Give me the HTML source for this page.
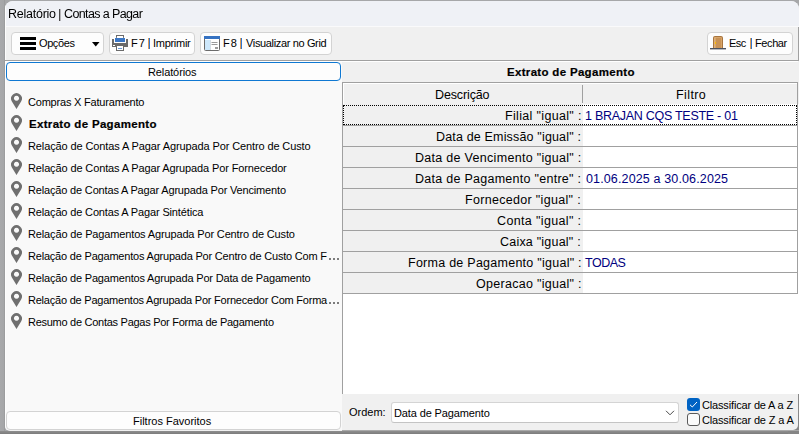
<!DOCTYPE html>
<html><head><meta charset="utf-8">
<style>
html,body{margin:0;padding:0;}
body{width:799px;height:434px;position:relative;overflow:hidden;background:#a6a7a9;font-family:"Liberation Sans",sans-serif;}
.a{position:absolute;}
.t{position:absolute;white-space:pre;font-family:"Liberation Sans",sans-serif;}
.btn{position:absolute;box-sizing:border-box;background:#fdfdfd;border:1px solid #d3d3d3;border-radius:4px;}
</style></head><body>
<!-- frame -->
<div class="a" style="left:0;top:0;width:5px;height:434px;background:linear-gradient(to right,#a8a9ab 0,#a5a6a8 80%,#939495 100%);"></div>
<div class="a" style="left:0;top:431px;width:799px;height:3px;background:linear-gradient(to bottom,#8e8e8e,#7c7c7c);"></div>
<!-- window -->
<div class="a" style="left:5px;top:1px;width:794px;height:430px;background:#f0f0f0;border-radius:8px 8px 5px 5px;overflow:hidden;">
  <!-- title bar -->
  <div class="a" style="left:0;top:0;width:794px;height:25px;background:#eff1f6;"></div>
  <div class="a" style="left:0;top:25px;width:794px;height:1px;background:#fafafb;"></div>
  <div class="a" style="left:0;top:0;width:1px;height:429px;background:#fdfdfd;"></div>
  <!-- toolbar right line -->
  <div class="a" style="left:793px;top:26px;width:1px;height:34px;background:#a0a0a0;"></div>
  <!-- separator -->
  <div class="a" style="left:0;top:59px;width:794px;height:1px;background:#a0a0a0;"></div>
  <div class="a" style="left:1px;top:60px;width:792px;height:1px;background:#ffffff;"></div>
  <!-- left panel -->
  <div class="a" style="left:1px;top:61px;width:336px;height:368px;background:#f9f9f9;"></div>
  <!-- right panel bottom white line -->
</div>

<div class="a" style="left:798px;top:394px;width:1px;height:40px;background:#8a8a8a;"></div>
<div class="a" style="left:788px;top:415px;width:11px;height:19px;overflow:hidden;"><div class="a" style="left:0;top:0;width:10px;height:15px;border-bottom-right-radius:5px;box-shadow:0 0 0 30px #858585;"></div></div>
<div class="a" style="left:342px;top:430px;width:457px;height:1px;background:#a9a9a9;"></div>
<!-- toolbar buttons -->
<div class="btn" style="left:11px;top:32px;width:93px;height:23px;"></div>
<div class="btn" style="left:109px;top:32px;width:86px;height:23px;"></div>
<div class="btn" style="left:200px;top:32px;width:132px;height:23px;"></div>
<div class="btn" style="left:707px;top:32px;width:86px;height:23px;"></div>

<!-- hamburger -->
<div class="a" style="left:20px;top:37px;width:16px;height:3px;background:#000;"></div>
<div class="a" style="left:20px;top:42px;width:16px;height:3px;background:#000;"></div>
<div class="a" style="left:20px;top:47px;width:16px;height:3px;background:#000;"></div>
<svg class="a" style="left:92px;top:42px;" width="8" height="5" viewBox="0 0 8 5"><path d="M0,0 L7.5,0 L3.75,4.5 Z" fill="#000"/></svg>

<!-- printer -->
<svg class="a" style="left:112px;top:35px;" width="16" height="16" viewBox="0 0 16 16">
  <rect x="4.5" y="0.5" width="7" height="4" fill="#fff" stroke="#6b6b6b" stroke-width="1"/>
  <path d="M0,4 H2 V8 H14 V4 H16 V12 H0 Z" fill="#6b6b6b"/>
  <rect x="2" y="2.8" width="12" height="5.2" fill="#fff"/>
  <rect x="3" y="3" width="10" height="4" fill="#3b77c6"/>
  <rect x="1" y="10" width="2" height="1" fill="#fff"/>
  <rect x="4.5" y="10.5" width="7" height="5" fill="#fff" stroke="#6b6b6b" stroke-width="1"/>
  <rect x="6" y="13" width="4" height="1" fill="#6b9ad6"/>
</svg>

<!-- grid icon -->
<svg class="a" style="left:204px;top:36px;" width="16" height="15" viewBox="0 0 16 15">
  <rect x="0.5" y="0.5" width="15" height="14" rx="1" fill="#fff" stroke="#6b6b6b"/>
  <rect x="0" y="0" width="16" height="3" fill="#3572c2"/>
  <rect x="1" y="4" width="5" height="10" fill="#cde8fc"/>
  <rect x="6" y="4" width="1" height="10" fill="#d5dde4"/>
  <rect x="7.5" y="6" width="6" height="1" fill="#9a9a9a"/>
  <rect x="7.5" y="8" width="6" height="1" fill="#9a9a9a"/>
  <rect x="11" y="11" width="3" height="2" fill="#9a9a9a"/>
</svg>

<!-- door -->
<svg class="a" style="left:710px;top:36px;" width="16" height="14" viewBox="0 0 16 14">
  <path d="M3,12 V2 Q3,0 5,0 H11 Q13,0 13,2 V12 Z" fill="#a8743e"/>
  <path d="M4,12 V2 Q4,1 5,1 H11 Q12,1 12,2 V12 Z" fill="#d7a468"/>
  <rect x="5" y="2" width="6" height="10" fill="#c99256"/>
  <rect x="4.6" y="1.5" width="0.8" height="10.5" fill="#e9c596"/>
  <rect x="5" y="6" width="1" height="2" fill="#ffbf00"/>
  <rect x="0" y="12" width="16" height="1.4" fill="#4b5260"/>
</svg>

<!-- left panel buttons -->
<div class="btn" style="left:6px;top:62px;width:335px;height:19px;border:1px solid #0f78d2;border-radius:4px;"></div>
<div class="btn" style="left:6px;top:411px;width:335px;height:19px;"></div>

<!-- pins -->
<svg class="a" style="left:11px;top:93px;" width="11" height="252" viewBox="0 0 11 252">
  <defs><path id="pin" fill-rule="evenodd" fill="#6f6f6f" d="M5.5,16 L0.89,8.41 A5.4,5.4 0 1 1 10.11,8.41 Z M5.5,2.75 A2.55,2.55 0 1 0 5.5001,2.75 Z"/></defs>
  <use href="#pin" y="0"/><use href="#pin" y="22"/><use href="#pin" y="44"/><use href="#pin" y="66"/><use href="#pin" y="88"/><use href="#pin" y="110"/><use href="#pin" y="132"/><use href="#pin" y="154"/><use href="#pin" y="176"/><use href="#pin" y="198"/><use href="#pin" y="220"/>
</svg>

<!-- grid -->
<div class="a" style="left:342px;top:82px;width:457px;height:312px;background:#fff;"></div>
<div class="a" style="left:342px;top:82px;width:1px;height:312px;background:#a0a0a0;"></div>
<div class="a" style="left:342px;top:82px;width:456px;height:1px;background:#a0a0a0;"></div><div class="a" style="left:798px;top:82px;width:1px;height:22px;background:#f0f0f0;"></div>
<div class="a" style="left:797px;top:82px;width:1px;height:212px;background:#a0a0a0;"></div>
<!-- header -->
<div class="a" style="left:344px;top:84px;width:453px;height:20px;background:#f0f0f0;"></div>
<div class="a" style="left:582px;top:85px;width:1px;height:18px;background:#a0a0a0;"></div>
<!-- rows -->
<div id="rows"></div>
<div class="a" style="left:343px;top:104px;width:240px;height:21px;background:#f0f0f0;"></div>
<div class="a" style="left:343px;top:125px;width:240px;height:21px;background:#f0f0f0;"></div>
<div class="a" style="left:343px;top:146px;width:240px;height:21px;background:#f0f0f0;"></div>
<div class="a" style="left:343px;top:167px;width:240px;height:21px;background:#f0f0f0;"></div>
<div class="a" style="left:343px;top:188px;width:240px;height:21px;background:#f0f0f0;"></div>
<div class="a" style="left:343px;top:209px;width:240px;height:21px;background:#f0f0f0;"></div>
<div class="a" style="left:343px;top:230px;width:240px;height:21px;background:#f0f0f0;"></div>
<div class="a" style="left:343px;top:251px;width:240px;height:21px;background:#f0f0f0;"></div>
<div class="a" style="left:343px;top:272px;width:240px;height:21px;background:#f0f0f0;"></div>
<div class="a" style="left:343px;top:125px;width:454px;height:1px;background:#a0a0a0;"></div>
<div class="a" style="left:343px;top:146px;width:454px;height:1px;background:#a0a0a0;"></div>
<div class="a" style="left:343px;top:167px;width:454px;height:1px;background:#a0a0a0;"></div>
<div class="a" style="left:343px;top:188px;width:454px;height:1px;background:#a0a0a0;"></div>
<div class="a" style="left:343px;top:209px;width:454px;height:1px;background:#a0a0a0;"></div>
<div class="a" style="left:343px;top:230px;width:454px;height:1px;background:#a0a0a0;"></div>
<div class="a" style="left:343px;top:251px;width:454px;height:1px;background:#a0a0a0;"></div>
<div class="a" style="left:343px;top:272px;width:454px;height:1px;background:#a0a0a0;"></div>
<div class="a" style="left:343px;top:293px;width:454px;height:1px;background:#a0a0a0;"></div>
<!-- focus rect -->
<div class="a" style="left:343px;top:105px;width:454px;height:20px;box-sizing:border-box;border:1px dotted #000;"></div>

<!-- combo -->
<div class="a" style="left:391px;top:402px;width:288px;height:21px;box-sizing:border-box;background:#fff;border:1px solid #d4d4d4;border-bottom-color:#c4c4c4;border-radius:3px;"></div>
<svg class="a" style="left:665px;top:410px;" width="10" height="6" viewBox="0 0 10 6"><path d="M1,0.8 L5,4.8 L9,0.8" fill="none" stroke="#4a4a4a" stroke-width="1"/></svg>
<!-- checkboxes -->
<div class="a" style="left:687px;top:398px;width:13px;height:13px;background:#0063c4;border-radius:3px;"></div>
<svg class="a" style="left:687px;top:398px;" width="13" height="13" viewBox="0 0 13 13"><path d="M3,6.8 L5.3,9 L10,4" fill="none" stroke="#fff" stroke-width="1"/></svg>
<div class="a" style="left:687px;top:413px;width:13px;height:13px;box-sizing:border-box;background:#fbfbfb;border:1px solid #5a5a5a;border-radius:3px;"></div>

<div class="a" style="left:328.5px;top:258px;width:2px;height:2px;background:#000;opacity:.5;"></div>
<div class="a" style="left:332.5px;top:258px;width:2px;height:2px;background:#000;opacity:.5;"></div>
<div class="a" style="left:336.5px;top:258px;width:2px;height:2px;background:#000;opacity:.5;"></div>
<div class="a" style="left:328.5px;top:302px;width:2px;height:2px;background:#000;opacity:.5;"></div>
<div class="a" style="left:332.5px;top:302px;width:2px;height:2px;background:#000;opacity:.5;"></div>
<div class="a" style="left:336.5px;top:302px;width:2px;height:2px;background:#000;opacity:.5;"></div>
<div class="a" style="left:148px;top:38px;width:1px;height:11px;background:#dc9a55;"></div><div class="a" style="left:149px;top:38px;width:1px;height:11px;background:#2f76d2;"></div>
<div class="a" style="left:240px;top:38px;width:1px;height:11px;background:#dc9a55;"></div><div class="a" style="left:241px;top:38px;width:1px;height:11px;background:#2f76d2;"></div>
<div class="a" style="left:750px;top:38px;width:1px;height:11px;background:#dc9a55;"></div><div class="a" style="left:751px;top:38px;width:1px;height:11px;background:#2f76d2;"></div>
<div class="a" style="left:59px;top:9px;width:1px;height:12px;background:#4a4a4a;"></div><div class="a" style="left:60px;top:9px;width:1px;height:12px;background:#b4b4b8;"></div>
<div class="t" id="t0" style="will-change:transform;left:8.000px;top:7px;font-size:12.5px;line-height:14px;letter-spacing:-0.250px;color:#000;">Relatório</div>
<div class="t" id="t1" style="will-change:transform;left:64.000px;top:7px;font-size:12.5px;line-height:14px;letter-spacing:-0.615px;color:#000;">Contas a Pagar</div>
<div class="t" id="t2" style="left:39.000px;top:37px;font-size:11px;line-height:12px;letter-spacing:-0.400px;color:#000;">Opções</div>
<div class="t" id="t3" style="left:131.000px;top:37px;font-size:11px;line-height:12px;letter-spacing:1.000px;color:#000;">F7</div>
<div class="t" id="t4" style="left:153.000px;top:37px;font-size:11px;line-height:12px;letter-spacing:-0.286px;color:#000;">Imprimir</div>
<div class="t" id="t5" style="left:223.000px;top:37px;font-size:11px;line-height:12px;letter-spacing:1.000px;color:#000;">F8</div>
<div class="t" id="t6" style="left:246.000px;top:37px;font-size:11px;line-height:12px;letter-spacing:-0.353px;color:#000;">Visualizar no Grid</div>
<div class="t" id="t7" style="left:729.000px;top:37px;font-size:11px;line-height:12px;letter-spacing:-0.500px;color:#000;">Esc</div>
<div class="t" id="t8" style="left:755.000px;top:37px;font-size:11px;line-height:12px;letter-spacing:-0.400px;color:#000;">Fechar</div>
<div class="t" id="t9" style="left:148.000px;top:66px;font-size:11px;line-height:12px;letter-spacing:-0.111px;color:#000;">Relatórios</div>
<div class="t" id="t10" style="left:133.000px;top:415px;font-size:11px;line-height:12px;letter-spacing:0.000px;color:#000;">Filtros Favoritos</div>
<div class="t" id="t11" style="left:28.000px;top:96px;font-size:11px;line-height:12px;letter-spacing:-0.200px;color:#000;">Compras X Faturamento</div>
<div class="t" id="t12" style="left:29.000px;top:118px;font-size:11.5px;line-height:12px;letter-spacing:0.316px;color:#000;font-weight:700;-webkit-text-stroke:0.2px #000;">Extrato de Pagamento</div>
<div class="t" id="t13" style="left:28.000px;top:140px;font-size:11px;line-height:12px;letter-spacing:-0.113px;color:#000;">Relação de Contas A Pagar Agrupada Por Centro de Custo</div>
<div class="t" id="t14" style="left:28.000px;top:162px;font-size:11px;line-height:12px;letter-spacing:-0.125px;color:#000;">Relação de Contas A Pagar Agrupada Por Fornecedor</div>
<div class="t" id="t15" style="left:28.000px;top:184px;font-size:11px;line-height:12px;letter-spacing:-0.167px;color:#000;">Relação de Contas A Pagar Agrupada Por Vencimento</div>
<div class="t" id="t16" style="left:28.000px;top:206px;font-size:11px;line-height:12px;letter-spacing:-0.147px;color:#000;">Relação de Contas A Pagar Sintética</div>
<div class="t" id="t17" style="left:28.000px;top:228px;font-size:11px;line-height:12px;letter-spacing:-0.143px;color:#000;">Relação de Pagamentos Agrupada Por Centro de Custo</div>
<div class="t" id="t18" style="left:28.000px;top:250px;font-size:11px;line-height:12px;letter-spacing:-0.200px;color:#000;">Relação de Pagamentos Agrupada Por Centro de Custo Com F</div>
<div class="t" id="t19" style="left:28.000px;top:272px;font-size:11px;line-height:12px;letter-spacing:-0.176px;color:#000;">Relação de Pagamentos Agrupada Por Data de Pagamento</div>
<div class="t" id="t20" style="left:28.000px;top:294px;font-size:11px;line-height:12px;letter-spacing:-0.222px;color:#000;">Relação de Pagamentos Agrupada Por Fornecedor Com Forma</div>
<div class="t" id="t21" style="left:28.000px;top:316px;font-size:11px;line-height:12px;letter-spacing:-0.273px;color:#000;">Resumo de Contas Pagas Por Forma de Pagamento</div>
<div class="t" id="t22" style="left:507.000px;top:66px;font-size:11.5px;line-height:12px;letter-spacing:0.316px;color:#000;font-weight:700;-webkit-text-stroke:0.2px #000;">Extrato de Pagamento</div>
<div class="t" id="t23" style="left:435.000px;top:88px;font-size:12.5px;line-height:14px;letter-spacing:-0.125px;color:#000;">Descrição</div>
<div class="t" id="t24" style="left:676.000px;top:88px;font-size:12.5px;line-height:14px;letter-spacing:0.400px;color:#000;">Filtro</div>
<div class="t" id="t25" style="left:505.000px;top:109px;font-size:12.5px;line-height:14px;letter-spacing:0.333px;color:#000;">Filial "igual" :</div>
<div class="t" id="t26" style="left:436.000px;top:130px;font-size:12.5px;line-height:14px;letter-spacing:0.167px;color:#000;">Data de Emissão "igual" :</div>
<div class="t" id="t27" style="left:415.000px;top:151px;font-size:12.5px;line-height:14px;letter-spacing:0.296px;color:#000;">Data de Vencimento "igual" :</div>
<div class="t" id="t28" style="left:415.000px;top:172px;font-size:12.5px;line-height:14px;letter-spacing:0.269px;color:#000;">Data de Pagamento "entre" :</div>
<div class="t" id="t29" style="left:465.000px;top:193px;font-size:12.5px;line-height:14px;letter-spacing:0.316px;color:#000;">Fornecedor "igual" :</div>
<div class="t" id="t30" style="left:497.000px;top:214px;font-size:12.5px;line-height:14px;letter-spacing:0.357px;color:#000;">Conta "igual" :</div>
<div class="t" id="t31" style="left:500.000px;top:235px;font-size:12.5px;line-height:14px;letter-spacing:0.214px;color:#000;">Caixa "igual" :</div>
<div class="t" id="t32" style="left:408.000px;top:256px;font-size:12.5px;line-height:14px;letter-spacing:0.259px;color:#000;">Forma de Pagamento "igual" :</div>
<div class="t" id="t33" style="left:476.000px;top:277px;font-size:12.5px;line-height:14px;letter-spacing:0.294px;color:#000;">Operacao "igual" :</div>
<div class="t" id="t34" style="left:585.000px;top:109px;font-size:12.5px;line-height:14px;letter-spacing:-0.273px;color:#000080;">1 BRAJAN CQS TESTE - 01</div>
<div class="t" id="t35" style="left:586.000px;top:172px;font-size:12.5px;line-height:14px;letter-spacing:0.136px;color:#000080;">01.06.2025 a 30.06.2025</div>
<div class="t" id="t36" style="left:585.000px;top:256px;font-size:12.5px;line-height:14px;letter-spacing:-0.500px;color:#000080;">TODAS</div>
<div class="t" id="t37" style="left:349.000px;top:406px;font-size:11px;line-height:12px;letter-spacing:0.000px;color:#000;">Ordem:</div>
<div class="t" id="t38" style="left:394.000px;top:407px;font-size:11px;line-height:12px;letter-spacing:-0.125px;color:#000;">Data de Pagamento</div>
<div class="t" id="t39" style="left:702.000px;top:399px;font-size:11px;line-height:12px;letter-spacing:-0.158px;color:#000;">Classificar de A a Z</div>
<div class="t" id="t40" style="left:702.000px;top:414px;font-size:11px;line-height:12px;letter-spacing:-0.158px;color:#000;">Classificar de Z a A</div>
</body></html>
